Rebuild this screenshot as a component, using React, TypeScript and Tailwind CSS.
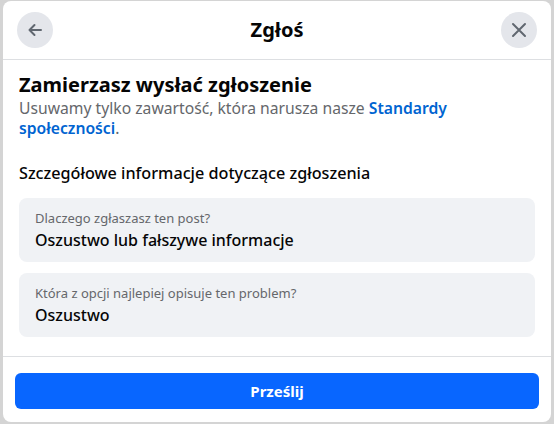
import React from "react";

export default function App() {
  return (
    <div
      className="w-[554px] h-[424px] bg-[#d4d4d4] pt-px px-[3px] pb-[2px] overflow-hidden"
      style={{ fontFamily: '"Noto Sans", "Open Sans", sans-serif' }}
    >
      <div className="h-full bg-white rounded-lg flex flex-col">
        <div className="h-[59px] flex items-center justify-between px-[14px] border-b border-[#dddfe2] shrink-0">
          <button className="w-9 h-9 rounded-full bg-[#e4e6eb] flex items-center justify-center">
            <svg width="20" height="20" viewBox="0 0 20 20" fill="none" stroke="#606770" strokeWidth="2" strokeLinecap="round" strokeLinejoin="round">
              <path d="M16 10H4.5M9.5 5l-5 5 5 5" />
            </svg>
          </button>
          <div className="text-[20px] font-bold text-[#050505] leading-6">Zgłoś</div>
          <button className="w-9 h-9 rounded-full bg-[#e4e6eb] flex items-center justify-center">
            <svg width="20" height="20" viewBox="0 0 20 20" fill="none" stroke="#606770" strokeWidth="2" strokeLinecap="round">
              <path d="M4 4l12 12M16 4L4 16" />
            </svg>
          </button>
        </div>
        <div className="px-4 pt-[13px] flex-1">
          <div className="text-[20px] font-bold text-[#050505] leading-6">Zamierzasz wysłać zgłoszenie</div>
          <div className="text-[15.7px] text-[#65676b] leading-5 mt-[1px]">
            Usuwamy tylko zawartość, która narusza nasze{" "}
            <span className="text-[#0064d1] font-semibold">Standardy społeczności</span>.
          </div>
          <div className="text-[16.2px] font-medium text-[#050505] leading-5 mt-[25px]">
            Szczegółowe informacje dotyczące zgłoszenia
          </div>
          <div className="mt-[15px] flex flex-col gap-[11px]">
            <div className="h-[64px] bg-[#f0f2f5] rounded-lg px-4 pt-[12px]">
              <div className="text-[13px] text-[#65676b] leading-4">Dlaczego zgłaszasz ten post?</div>
              <div className="text-[16px] font-medium text-[#050505] leading-[22px] mt-[3px]">Oszustwo lub fałszywe informacje</div>
            </div>
            <div className="h-[64px] bg-[#f0f2f5] rounded-lg px-4 pt-[12px]">
              <div className="text-[13px] text-[#65676b] leading-4">Która z opcji najlepiej opisuje ten problem?</div>
              <div className="text-[16px] font-medium text-[#050505] leading-[22px] mt-[3px]">Oszustwo</div>
            </div>
          </div>
        </div>
        <div className="border-t border-[#dddfe2] px-3 pt-4 pb-[13px] shrink-0">
          <button className="w-full h-9 rounded-md bg-[#0866ff] text-white text-[15px] font-bold">Prześlij</button>
        </div>
      </div>
    </div>
  );
}
